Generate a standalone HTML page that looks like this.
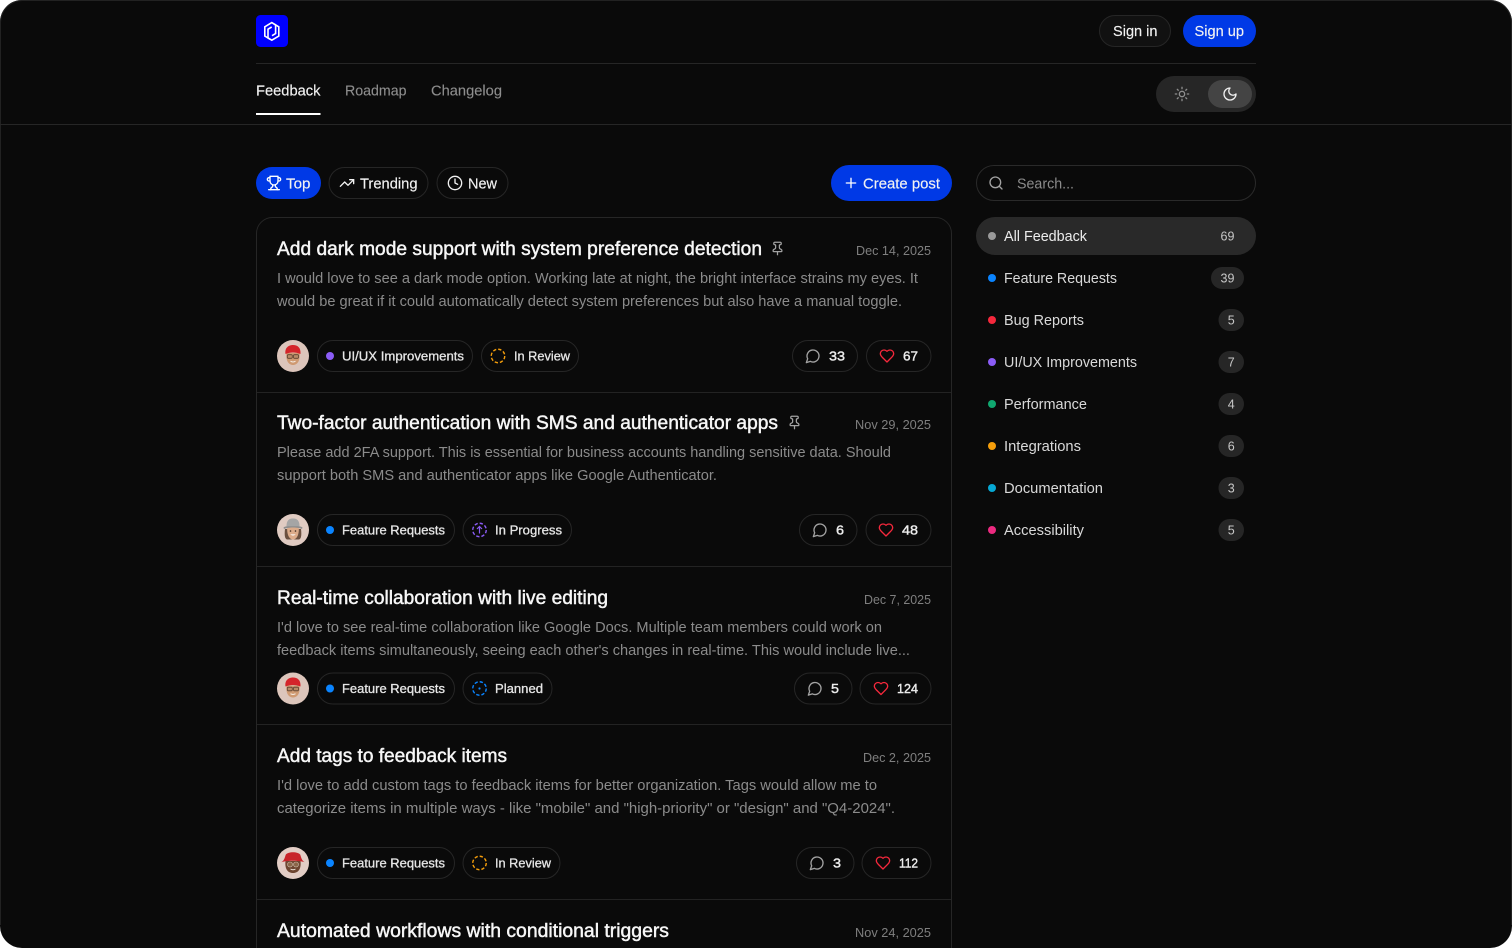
<!DOCTYPE html>
<html lang="en">
<head>
<meta charset="utf-8">
<title>Feedback</title>
<style>
html,body{margin:0;padding:0;background:#fff;width:1512px;height:948px;overflow:hidden}
svg{display:block}
text{font-family:"Liberation Sans",sans-serif;white-space:pre}
.t{font-size:19px;fill:#f7f7f7;stroke:#f7f7f7;stroke-width:.45px}
.d{font-size:14.6px;fill:#8b8b8b}
.dt{font-size:12.5px;fill:#7f7f7f}
.b{font-size:12.6px;fill:#e6e6e6;stroke:#e6e6e6;stroke-width:.3px}
.n{font-size:12.8px;fill:#ededed;stroke:#ededed;stroke-width:.4px}
.s{font-size:14.6px;fill:#d9d9d9}
.c{font-size:12.5px;fill:#c8c8c8;text-anchor:middle}
.nav{font-size:14.6px;fill:#8e8e8e;stroke:#8e8e8e;stroke-width:.12px}
.w{font-size:14.6px;fill:#f2f2f2;stroke:#f2f2f2;stroke-width:.15px}
.p{fill:none;stroke:#262626}
.i{fill:none;stroke-linecap:round;stroke-linejoin:round;stroke-width:2}
</style>
</head>
<body>
<svg xmlns="http://www.w3.org/2000/svg" width="1512" height="948" viewBox="0 0 1512 948">
<defs>
<symbol id="msg" viewBox="0 0 24 24"><path class="i" stroke="#a3a3a3" d="M7.9 20A9 9 0 1 0 4 16.1L2 22Z"/></symbol>
<symbol id="heart" viewBox="0 0 24 24"><path class="i" stroke="#f5283c" d="M19 14c1.49-1.46 3-3.21 3-5.5A5.5 5.5 0 0 0 16.5 3c-1.76 0-3 .5-4.5 2-1.5-1.5-2.74-2-4.5-2A5.5 5.5 0 0 0 2 8.5c0 2.3 1.5 4.05 3 5.5l7 7Z"/></symbol>
<symbol id="pin" viewBox="0 0 24 24"><path class="i" stroke="#a3a3a3" d="M12 17v5"/><path class="i" stroke="#a3a3a3" d="M9 10.76a2 2 0 0 1-1.11 1.79l-1.78.9A2 2 0 0 0 5 15.24V16a1 1 0 0 0 1 1h12a1 1 0 0 0 1-1v-.76a2 2 0 0 0-1.11-1.79l-1.78-.9A2 2 0 0 1 15 10.76V7a1 1 0 0 1 1-1 2 2 0 0 0 0-4H8a2 2 0 0 0 0 4 1 1 0 0 1 1 1z"/></symbol>
<g id="av1">
<circle r="16" fill="#dcc5bb"/>
<path d="M-6.500 -3 C-7.500 6 -3.500 9 0 9 C3.500 9 7.500 6 6.500 -3Z" fill="#cf9a72"/>
<path d="M-7.500 -2 C-8.500 -8.500 -4 -11 0 -11 C4.500 -11 8 -8.500 7.500 -2 C3 -4 -3 -4 -7.500 -2Z" fill="#d4242a"/>
<rect x="-5.700" y="-1.300" width="5" height="3.600" rx="1" fill="#b98a66" stroke="#5a4030" stroke-width=".8"/>
<rect x=".5" y="-1.300" width="5" height="3.600" rx="1" fill="#b98a66" stroke="#5a4030" stroke-width=".8"/>
<path d="M-2.500 5.200 Q0 6.800 2.500 5.200" fill="none" stroke="#f5ece4" stroke-width="1"/>
</g>
<g id="av2">
<circle r="16" fill="#e0cbc2"/>
<path d="M-8 -1 C-9 7 -7.500 9.500 -5.500 9.500 H5.500 C7.500 9.500 9 7 8 -1Z" fill="#6a5040"/>
<path d="M-5.800 -3 C-6.300 6 -3 9.500 0 9.500 C3 9.500 6.300 6 5.800 -3Z" fill="#dbab8a"/>
<path d="M-9.500 -2.500 C-6 -5 6 -5 9.500 -2.500 L9 -1 C5 -3 -5 -3 -9 -1Z" fill="#8d8d8d"/>
<path d="M-6.500 -3.800 C-6.500 -10.500 -3 -11.500 0 -11.500 C3 -11.500 6.500 -10.500 6.500 -3.800Z" fill="#a5a5a5"/>
<path d="M-2.800 4.300 Q0 7 2.800 4.300Z" fill="#f7f0ea"/>
<circle cx="-2.500" cy="1" r=".8" fill="#3a2a20"/><circle cx="2.500" cy="1" r=".8" fill="#3a2a20"/>
</g>
<g id="av4">
<circle r="16" fill="#e2cdc5"/>
<path d="M-7.500 -2 C-8.500 7 -4.500 10 0 10 C4.500 10 8.500 7 7.500 -2Z" fill="#6e4630"/>
<path d="M-12 -.8 C-9 -2 -8.300 -5 -7.300 -8.300 C-5 -11.500 5 -11.500 7.300 -8.300 C8.300 -5 9 -2 12 -.8 C6 -2.800 -6 -2.800 -12 -.8Z" fill="#c8242a"/>
<circle cx="-3" cy="1.500" r="2.500" fill="#8a6648" stroke="#cdbba8" stroke-width=".6"/>
<circle cx="3" cy="1.500" r="2.500" fill="#8a6648" stroke="#cdbba8" stroke-width=".6"/>
<path d="M-2.500 6 Q0 7.500 2.500 6" fill="none" stroke="#f0e6dc" stroke-width="1"/>
</g>
</defs>

<rect x="0" y="0" width="1512" height="948" rx="22" ry="22" fill="#0a0a0a"/>
<path d="M.5 925V22.500A22 22 0 0 1 22.500 .5H1489.500A22 22 0 0 1 1511.500 22.500V925" fill="none" stroke="#222"/>

<!-- Header -->
<rect x="256" y="15" width="32" height="32" rx="4.500" fill="#0000ff"/>
<g fill="none" stroke="#fff" stroke-width="1.600" stroke-linejoin="miter">
<path d="M270.200 39.300L264.800 36V26.800L271.800 22.600L275.600 24.900V33.500L272 35.700"/>
<path d="M274 23.900L278.800 26.800V36L271.800 40.200L268 37.900V29.200L271.700 27"/>
</g>
<rect x="1099.500" y="15.500" width="71" height="31" rx="15.500" fill="#111" stroke="#262626"/>
<text class="w" x="1113" y="36" textLength="44.500" lengthAdjust="spacingAndGlyphs">Sign in</text>
<rect x="1183" y="15" width="73" height="32" rx="16" fill="#0039e6"/>
<text class="w" x="1194.500" y="36" textLength="49.500" lengthAdjust="spacingAndGlyphs">Sign up</text>
<path d="M256 63.500H1256" stroke="#262626"/>

<text class="w" x="256" y="95.500" textLength="64.500" lengthAdjust="spacingAndGlyphs">Feedback</text>
<text class="nav" x="345" y="95.500" textLength="61.500" lengthAdjust="spacingAndGlyphs">Roadmap</text>
<text class="nav" x="431" y="95.500" textLength="71" lengthAdjust="spacingAndGlyphs">Changelog</text>
<rect x="256" y="113" width="64.500" height="2" fill="#fff"/>
<path d="M0 124.500H1512" stroke="#262626"/>

<rect x="1156" y="76" width="100" height="36" rx="18" fill="#262626"/>
<rect x="1208" y="80" width="44" height="28" rx="14" fill="#444"/>
<svg x="1174" y="86" width="16" height="16" viewBox="0 0 24 24"><g class="i" stroke="#8f8f8f"><circle cx="12" cy="12" r="4"/><path d="M12 2v2M12 20v2M4.930 4.930l1.410 1.410M17.660 17.660l1.410 1.410M2 12h2M20 12h2M6.340 17.660l-1.410 1.410M19.070 4.930l-1.410 1.410"/></g></svg>
<svg x="1222" y="86" width="16" height="16" viewBox="0 0 24 24"><path class="i" stroke="#f0f0f0" d="M12 3a6 6 0 0 0 9 9 9 9 0 1 1-9-9Z"/></svg>

<!-- Filters -->
<rect x="256" y="167" width="65" height="32" rx="16" fill="#0039e6"/>
<svg x="266" y="175" width="16" height="16" viewBox="0 0 24 24"><g class="i" stroke="#fff"><path d="M6 9H4.500a2.500 2.500 0 0 1 0-5H6"/><path d="M18 9h1.500a2.500 2.500 0 0 0 0-5H18"/><path d="M4 22h16"/><path d="M10 14.660V17c0 .55-.47.98-.97 1.210C7.850 18.750 7 20.240 7 22"/><path d="M14 14.660V17c0 .55.47.98.97 1.210C16.150 18.750 17 20.240 17 22"/><path d="M18 2H6v7a6 6 0 0 0 12 0V2Z"/></g></svg>
<text class="w" x="286" y="188.500" textLength="24.500" lengthAdjust="spacingAndGlyphs">Top</text>
<rect x="329" y="167.500" width="99" height="31" rx="15.500" class="p"/>
<svg x="339" y="175" width="16" height="16" viewBox="0 0 24 24"><g class="i" stroke="#f2f2f2"><path d="M22 7L13.500 15.500L8.500 10.500L2 17"/><path d="M16 7H22V13"/></g></svg>
<text class="w" x="360" y="188.500" textLength="57.500" lengthAdjust="spacingAndGlyphs">Trending</text>
<rect x="437" y="167.500" width="71" height="31" rx="15.500" class="p"/>
<svg x="447" y="175" width="16" height="16" viewBox="0 0 24 24"><g class="i" stroke="#f2f2f2"><circle cx="12" cy="12" r="10"/><path d="M12 6V12L16 14"/></g></svg>
<text class="w" x="468" y="188.500" textLength="29" lengthAdjust="spacingAndGlyphs">New</text>
<rect x="831" y="165" width="121" height="36" rx="18" fill="#0039e6"/>
<svg x="843" y="175" width="16" height="16" viewBox="0 0 24 24"><path class="i" stroke="#fff" d="M5 12h14M12 5v14"/></svg>
<text class="w" x="863" y="188.500" textLength="77" lengthAdjust="spacingAndGlyphs">Create post</text>

<!-- Card list -->
<path d="M256.500 948V233.500a16 16 0 0 1 16-16H935.500a16 16 0 0 1 16 16V948" fill="none" stroke="#262626"/>
<path d="M257 392.500H951M257 566.500H951M257 724.500H951M257 899.500H951" stroke="#232323"/>

<!-- Post 1 -->
<text class="t" x="277" y="255" textLength="485" lengthAdjust="spacingAndGlyphs">Add dark mode support with system preference detection</text>
<use href="#pin" x="770" y="241" width="15" height="15"/>
<text class="dt" x="856" y="255" textLength="75" lengthAdjust="spacingAndGlyphs">Dec 14, 2025</text>
<text class="d" x="277" y="283" textLength="641" lengthAdjust="spacingAndGlyphs">I would love to see a dark mode option. Working late at night, the bright interface strains my eyes. It</text>
<text class="d" x="277" y="306" textLength="625" lengthAdjust="spacingAndGlyphs">would be great if it could automatically detect system preferences but also have a manual toggle.</text>
<use href="#av1" transform="translate(293 356)"/>
<rect x="317.500" y="340.500" width="155" height="31" rx="15.500" class="p"/>
<circle cx="330" cy="356" r="4" fill="#8b5cf6"/>
<text class="b" x="342" y="360.500" textLength="122" lengthAdjust="spacingAndGlyphs">UI/UX Improvements</text>
<rect x="481.500" y="340.500" width="97" height="31" rx="15.500" class="p"/>
<circle cx="498" cy="356" r="6.750" fill="none" stroke="#f59e0b" stroke-width="1.400" stroke-dasharray="3.300 2"/>
<text class="b" x="514" y="360.500" textLength="56" lengthAdjust="spacingAndGlyphs">In Review</text>
<rect x="792.500" y="340.500" width="65" height="31" rx="15.500" class="p"/>
<use href="#msg" x="805" y="348" width="16" height="16"/>
<text class="n" x="829" y="360.500" textLength="16" lengthAdjust="spacingAndGlyphs">33</text>
<rect x="866.500" y="340.500" width="64.500" height="31" rx="15.500" class="p"/>
<use href="#heart" x="879" y="348" width="16" height="16"/>
<text class="n" x="903" y="360.500" textLength="15" lengthAdjust="spacingAndGlyphs">67</text>

<!-- Post 2 -->
<text class="t" x="277" y="429" textLength="501" lengthAdjust="spacingAndGlyphs">Two-factor authentication with SMS and authenticator apps</text>
<use href="#pin" x="787" y="415" width="15" height="15"/>
<text class="dt" x="855" y="429" textLength="76" lengthAdjust="spacingAndGlyphs">Nov 29, 2025</text>
<text class="d" x="277" y="457" textLength="614" lengthAdjust="spacingAndGlyphs">Please add 2FA support. This is essential for business accounts handling sensitive data. Should</text>
<text class="d" x="277" y="480" textLength="440" lengthAdjust="spacingAndGlyphs">support both SMS and authenticator apps like Google Authenticator.</text>
<use href="#av2" transform="translate(293 530)"/>
<rect x="317.500" y="514.500" width="137" height="31" rx="15.500" class="p"/>
<circle cx="330" cy="530" r="4" fill="#0a84ff"/>
<text class="b" x="342" y="534.500" textLength="103" lengthAdjust="spacingAndGlyphs">Feature Requests</text>
<rect x="463" y="514.500" width="108.500" height="31" rx="15.500" class="p"/>
<circle cx="479.500" cy="530" r="6.750" fill="none" stroke="#8b5cf6" stroke-width="1.400" stroke-dasharray="3.300 2"/>
<path d="M479.500 533.500V527M477 529L479.500 526.500L482 529" fill="none" stroke="#8b5cf6" stroke-width="1.200"/>
<text class="b" x="495" y="534.500" textLength="67" lengthAdjust="spacingAndGlyphs">In Progress</text>
<rect x="799.500" y="514.500" width="57.500" height="31" rx="15.500" class="p"/>
<use href="#msg" x="812" y="522" width="16" height="16"/>
<text class="n" x="836" y="534.500" textLength="8" lengthAdjust="spacingAndGlyphs">6</text>
<rect x="866" y="514.500" width="65" height="31" rx="15.500" class="p"/>
<use href="#heart" x="878" y="522" width="16" height="16"/>
<text class="n" x="902" y="534.500" textLength="16" lengthAdjust="spacingAndGlyphs">48</text>

<!-- Post 3 -->
<text class="t" x="277" y="604" textLength="331" lengthAdjust="spacingAndGlyphs">Real-time collaboration with live editing</text>
<text class="dt" x="864" y="604" textLength="67" lengthAdjust="spacingAndGlyphs">Dec 7, 2025</text>
<text class="d" x="277" y="632" textLength="605" lengthAdjust="spacingAndGlyphs">I'd love to see real-time collaboration like Google Docs. Multiple team members could work on</text>
<text class="d" x="277" y="655" textLength="633" lengthAdjust="spacingAndGlyphs">feedback items simultaneously, seeing each other's changes in real-time. This would include live...</text>
<use href="#av1" transform="translate(293 688.500)"/>
<rect x="317.500" y="673" width="137" height="31" rx="15.500" class="p"/>
<circle cx="330" cy="688.500" r="4" fill="#0a84ff"/>
<text class="b" x="342" y="693" textLength="103" lengthAdjust="spacingAndGlyphs">Feature Requests</text>
<rect x="463" y="673" width="89" height="31" rx="15.500" class="p"/>
<circle cx="479.500" cy="688.500" r="6.750" fill="none" stroke="#0a84ff" stroke-width="1.400" stroke-dasharray="3.300 2"/>
<circle cx="479.500" cy="688.500" r="1.100" fill="#0a84ff"/>
<text class="b" x="495" y="693" textLength="48" lengthAdjust="spacingAndGlyphs">Planned</text>
<rect x="794.500" y="673" width="57.500" height="31" rx="15.500" class="p"/>
<use href="#msg" x="807" y="680.500" width="16" height="16"/>
<text class="n" x="831" y="693" textLength="8" lengthAdjust="spacingAndGlyphs">5</text>
<rect x="860" y="673" width="71" height="31" rx="15.500" class="p"/>
<use href="#heart" x="873" y="680.500" width="16" height="16"/>
<text class="n" x="897" y="693" textLength="21" lengthAdjust="spacingAndGlyphs">124</text>

<!-- Post 4 -->
<text class="t" x="277" y="762" textLength="230" lengthAdjust="spacingAndGlyphs">Add tags to feedback items</text>
<text class="dt" x="863" y="762" textLength="68" lengthAdjust="spacingAndGlyphs">Dec 2, 2025</text>
<text class="d" x="277" y="790" textLength="600" lengthAdjust="spacingAndGlyphs">I'd love to add custom tags to feedback items for better organization. Tags would allow me to</text>
<text class="d" x="277" y="813" textLength="618" lengthAdjust="spacingAndGlyphs">categorize items in multiple ways - like "mobile" and "high-priority" or "design" and "Q4-2024".</text>
<use href="#av4" transform="translate(293 863)"/>
<rect x="317.500" y="847.500" width="137" height="31" rx="15.500" class="p"/>
<circle cx="330" cy="863" r="4" fill="#0a84ff"/>
<text class="b" x="342" y="867.500" textLength="103" lengthAdjust="spacingAndGlyphs">Feature Requests</text>
<rect x="463" y="847.500" width="97" height="31" rx="15.500" class="p"/>
<circle cx="479.500" cy="863" r="6.750" fill="none" stroke="#f59e0b" stroke-width="1.400" stroke-dasharray="3.300 2"/>
<text class="b" x="495" y="867.500" textLength="56" lengthAdjust="spacingAndGlyphs">In Review</text>
<rect x="796.500" y="847.500" width="57.500" height="31" rx="15.500" class="p"/>
<use href="#msg" x="809" y="855" width="16" height="16"/>
<text class="n" x="833" y="867.500" textLength="8" lengthAdjust="spacingAndGlyphs">3</text>
<rect x="862" y="847.500" width="69" height="31" rx="15.500" class="p"/>
<use href="#heart" x="875" y="855" width="16" height="16"/>
<text class="n" x="899" y="867.500" textLength="19" lengthAdjust="spacingAndGlyphs">112</text>

<!-- Post 5 -->
<text class="t" x="277" y="937" textLength="392" lengthAdjust="spacingAndGlyphs">Automated workflows with conditional triggers</text>
<text class="dt" x="855" y="937" textLength="76" lengthAdjust="spacingAndGlyphs">Nov 24, 2025</text>

<!-- Sidebar -->
<rect x="976.500" y="165.500" width="279" height="35" rx="17.500" class="p" style="stroke:#2a2a2a"/>
<svg x="988" y="175" width="16" height="16" viewBox="0 0 24 24"><g class="i" stroke="#a3a3a3"><circle cx="11" cy="11" r="8"/><path d="M21 21L16.700 16.700"/></g></svg>
<text class="d" x="1017" y="188.500" textLength="57" lengthAdjust="spacingAndGlyphs">Search...</text>

<rect x="976" y="217" width="280" height="38" rx="19" fill="#292929"/>
<circle cx="992" cy="236" r="4" fill="#9a9a9a"/>
<text class="s" x="1004" y="241" textLength="83" lengthAdjust="spacingAndGlyphs" style="fill:#ececec">All Feedback</text>
<text class="c" x="1227.500" y="240.500">69</text>

<circle cx="992" cy="278" r="4" fill="#0a84ff"/>
<text class="s" x="1004" y="283" textLength="113" lengthAdjust="spacingAndGlyphs">Feature Requests</text>
<rect x="1211" y="267" width="33" height="22" rx="11" fill="#262626"/>
<text class="c" x="1227.500" y="282.500">39</text>

<circle cx="992" cy="320" r="4" fill="#f5283c"/>
<text class="s" x="1004" y="325" textLength="80" lengthAdjust="spacingAndGlyphs">Bug Reports</text>
<rect x="1218.500" y="309" width="25.500" height="22" rx="11" fill="#262626"/>
<text class="c" x="1231.250" y="324.500">5</text>

<circle cx="992" cy="362" r="4" fill="#8b5cf6"/>
<text class="s" x="1004" y="367" textLength="133" lengthAdjust="spacingAndGlyphs">UI/UX Improvements</text>
<rect x="1218.500" y="351" width="25.500" height="22" rx="11" fill="#262626"/>
<text class="c" x="1231.250" y="366.500">7</text>

<circle cx="992" cy="404" r="4" fill="#10a870"/>
<text class="s" x="1004" y="409" textLength="83" lengthAdjust="spacingAndGlyphs">Performance</text>
<rect x="1218.500" y="393" width="25.500" height="22" rx="11" fill="#262626"/>
<text class="c" x="1231.250" y="408.500">4</text>

<circle cx="992" cy="446" r="4" fill="#f59e0b"/>
<text class="s" x="1004" y="451" textLength="77" lengthAdjust="spacingAndGlyphs">Integrations</text>
<rect x="1218.500" y="435" width="25.500" height="22" rx="11" fill="#262626"/>
<text class="c" x="1231.250" y="450.500">6</text>

<circle cx="992" cy="488" r="4" fill="#06a8d4"/>
<text class="s" x="1004" y="493" textLength="99" lengthAdjust="spacingAndGlyphs">Documentation</text>
<rect x="1218.500" y="477" width="25.500" height="22" rx="11" fill="#262626"/>
<text class="c" x="1231.250" y="492.500">3</text>

<circle cx="992" cy="530" r="4" fill="#ec2a80"/>
<text class="s" x="1004" y="535" textLength="80" lengthAdjust="spacingAndGlyphs">Accessibility</text>
<rect x="1218.500" y="519" width="25.500" height="22" rx="11" fill="#262626"/>
<text class="c" x="1231.250" y="534.500">5</text>
</svg>
</body>
</html>
